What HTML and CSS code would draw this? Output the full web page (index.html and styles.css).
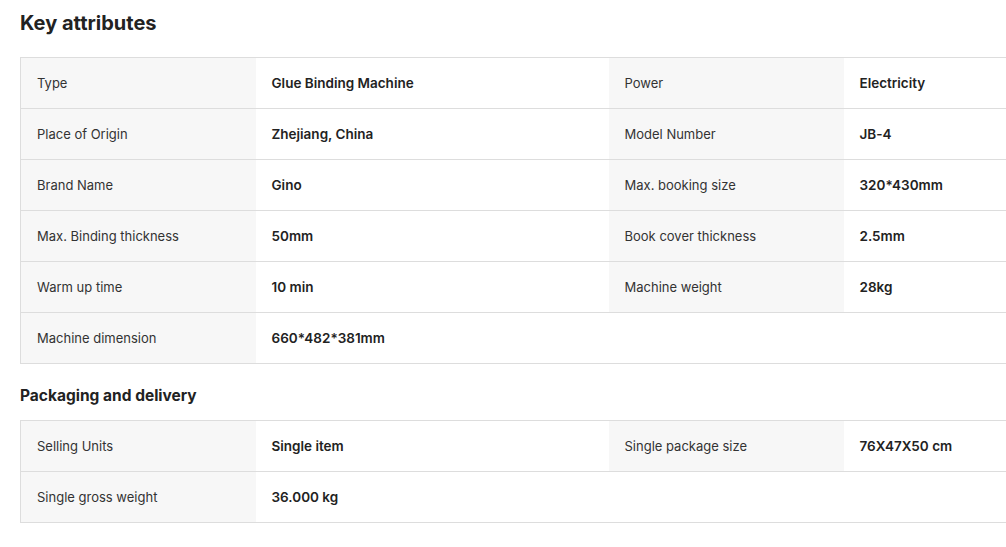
FILE: index.html
```html
<!DOCTYPE html>
<html lang="en">
<head>
    <meta charset="UTF-8">
    <meta name="viewport" content="width=device-width, initial-scale=1.0">
    <title>Key attributes</title>
    <link rel="stylesheet" href="styles.css">
</head>
<body>
    <div class="attributes">
        <h2 class="title">Key attributes</h2>
        <table class="attr-table">
            <colgroup>
                <col class="col-label"><col class="col-value"><col class="col-label"><col class="col-value">
            </colgroup>
            <tr>
                <td class="label">Type</td><td class="value">Glue Binding Machine</td>
                <td class="label">Power</td><td class="value">Electricity</td>
            </tr>
            <tr>
                <td class="label">Place of Origin</td><td class="value">Zhejiang, China</td>
                <td class="label">Model Number</td><td class="value">JB-4</td>
            </tr>
            <tr>
                <td class="label">Brand Name</td><td class="value">Gino</td>
                <td class="label">Max. booking size</td><td class="value">320*430mm</td>
            </tr>
            <tr>
                <td class="label">Max. Binding thickness</td><td class="value">50mm</td>
                <td class="label">Book cover thickness</td><td class="value">2.5mm</td>
            </tr>
            <tr>
                <td class="label">Warm up time</td><td class="value">10 min</td>
                <td class="label">Machine weight</td><td class="value">28kg</td>
            </tr>
            <tr>
                <td class="label">Machine dimension</td><td class="value">660*482*381mm</td>
                <td class="empty"></td><td class="empty"></td>
            </tr>
        </table>

        <h3 class="subtitle">Packaging and delivery</h3>
        <table class="attr-table">
            <colgroup>
                <col class="col-label"><col class="col-value"><col class="col-label"><col class="col-value">
            </colgroup>
            <tr>
                <td class="label">Selling Units</td><td class="value">Single item</td>
                <td class="label">Single package size</td><td class="value">76X47X50 cm</td>
            </tr>
            <tr>
                <td class="label">Single gross weight</td><td class="value">36.000 kg</td>
                <td class="empty"></td><td class="empty"></td>
            </tr>
        </table>
    </div>
</body>
</html>
```

FILE: styles.css
```css
body {
    font-family: Inter, "Noto Sans", sans-serif;
    font-feature-settings: "calt" 0;
    margin: 0;
    padding: 0;
    background-color: #fff;
    color: #222;
    overflow: hidden;
}
.attributes {
    padding: 0 0 0 20px;
    overflow: hidden;
}
.title {
    font-size: 20px;
    font-weight: 700;
    line-height: 28px;
    margin: 9px 0 20px;
    color: #222;
}
.subtitle {
    font-size: 15.5px;
    font-weight: 700;
    line-height: 22px;
    margin: 21px 0 13px;
    color: #222;
}
.attr-table {
    width: 1176px;
    table-layout: fixed;
    border-collapse: collapse;
    font-size: 13px;
}
.col-label {
    width: 235px;
}
.col-value {
    width: 353px;
}
.attr-table td {
    height: 51px;
    padding: 0 16px;
    border-top: 1px solid #dddddd;
    border-bottom: 1px solid #dddddd;
    box-sizing: border-box;
    vertical-align: middle;
}
.attr-table td:first-child {
    border-left: 1px solid #dddddd;
}
.label {
    background-color: #f7f7f7;
    color: #333;
    font-weight: 400;
}
.value {
    font-size: 13.5px;
    font-weight: 600;
    color: #222;
}
```
